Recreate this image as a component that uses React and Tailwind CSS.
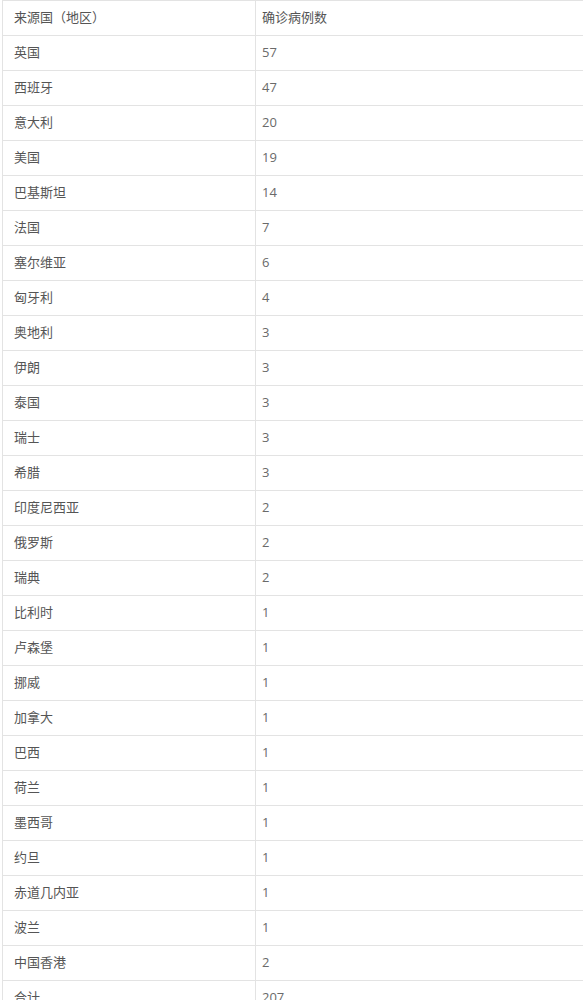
import React from 'react'

const rows = [
  ['英国', '57'],
  ['西班牙', '47'],
  ['意大利', '20'],
  ['美国', '19'],
  ['巴基斯坦', '14'],
  ['法国', '7'],
  ['塞尔维亚', '6'],
  ['匈牙利', '4'],
  ['奥地利', '3'],
  ['伊朗', '3'],
  ['泰国', '3'],
  ['瑞士', '3'],
  ['希腊', '3'],
  ['印度尼西亚', '2'],
  ['俄罗斯', '2'],
  ['瑞典', '2'],
  ['比利时', '1'],
  ['卢森堡', '1'],
  ['挪威', '1'],
  ['加拿大', '1'],
  ['巴西', '1'],
  ['荷兰', '1'],
  ['墨西哥', '1'],
  ['约旦', '1'],
  ['赤道几内亚', '1'],
  ['波兰', '1'],
  ['中国香港', '2'],
  ['合计', '207'],
]

function App() {
  return (
    <div className="bg-white overflow-hidden min-h-screen font-['Open_Sans','Noto_Sans_CJK_SC',sans-serif] text-[13px] text-[#555]">
      <table className="ml-[2px] w-[640px] border-collapse table-fixed">
        <colgroup>
          <col className="w-[253px]" />
          <col />
        </colgroup>
        <thead>
          <tr className="h-[35px]">
            <td className="border border-[#e3e3e3] px-[11px] align-middle">来源国（地区）</td>
            <td className="border border-[#e3e3e3] px-[6px] align-middle">确诊病例数</td>
          </tr>
        </thead>
        <tbody>
          {rows.map(([name, count]) => (
            <tr key={name} className="h-[35px]">
              <td className="border border-[#e3e3e3] px-[11px] align-middle">{name}</td>
              <td className="border border-[#e3e3e3] px-[6px] align-middle text-[#6a6a6a]">{count}</td>
            </tr>
          ))}
        </tbody>
      </table>
    </div>
  )
}

export default App
